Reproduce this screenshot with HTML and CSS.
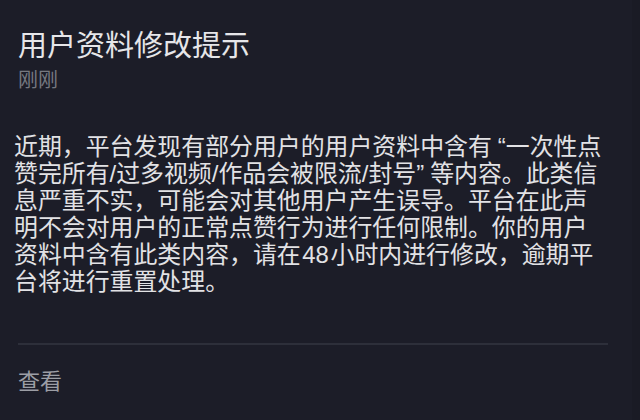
FILE: index.html
```html
<!DOCTYPE html>
<html lang="zh-CN">
<head>
    <meta charset="UTF-8">
    <meta name="viewport" content="width=device-width, initial-scale=1.0">
    <title>用户资料修改提示</title>
    <link rel="stylesheet" href="styles.css">
</head>
<body>

<div class="notice">
    <h1 class="notice-title">用户资料修改提示</h1>
    <div class="notice-time">刚刚</div>

    <p class="notice-text">近期，平台发现有部分用户的用户资料中含有<span class="quote-open">“</span>一次性点<br>赞完所有/过多视频/作品会被限流/封号<span class="quote-close">”</span>等内容。此类信<br>息严重不实，可能会对其他用户产生误导。平台在此声<br>明不会对用户的正常点赞行为进行任何限制。你的用户<br>资料中含有此类内容，请在 48 小时内进行修改，逾期平<br>台将进行重置处理。</p>

    <div class="notice-footer">
        <a class="notice-link">查看</a>
    </div>
</div>

</body>
</html>
```

FILE: styles.css
```css
body {
    margin: 0;
    padding: 0;
    background-color: #1c1d28;
    font-family: "Noto Sans CJK SC", "Noto Sans", sans-serif;
    width: 640px;
    height: 420px;
    overflow: hidden;
}

.notice {
    padding: 28px 0 0 0;
    border-right: 8px solid #1a1b25;
    height: 392px;
    width: 632px;
}

.notice-title {
    margin: 0 0 0 18px;
    font-size: 29px;
    font-weight: normal;
    line-height: 30px;
    color: #e6e6e9;
}

.notice-time {
    margin: 9px 0 0 18px;
    font-size: 20px;
    line-height: 24px;
    color: #767880;
}

.notice-text {
    margin: 42px 0 0 14px;
    width: 612px;
    font-family: "Liberation Sans", "Noto Sans CJK SC", sans-serif;
    font-size: 23.9px;
    line-height: 27px;
    word-spacing: -5px;
    color: #e2e2e5;
}

/* quotes sit against the text they open / close */
.quote-open {
    padding-left: 6px;
}

.quote-close {
    padding-right: 6px;
}

.notice-footer {
    margin: 48px 0 0 18px;
    width: 590px;
    border-top: 2px solid #2d2f3a;
    padding-top: 22px;
}

.notice-link {
    font-size: 22px;
    line-height: 24px;
    color: #9c9ea5;
}
```
